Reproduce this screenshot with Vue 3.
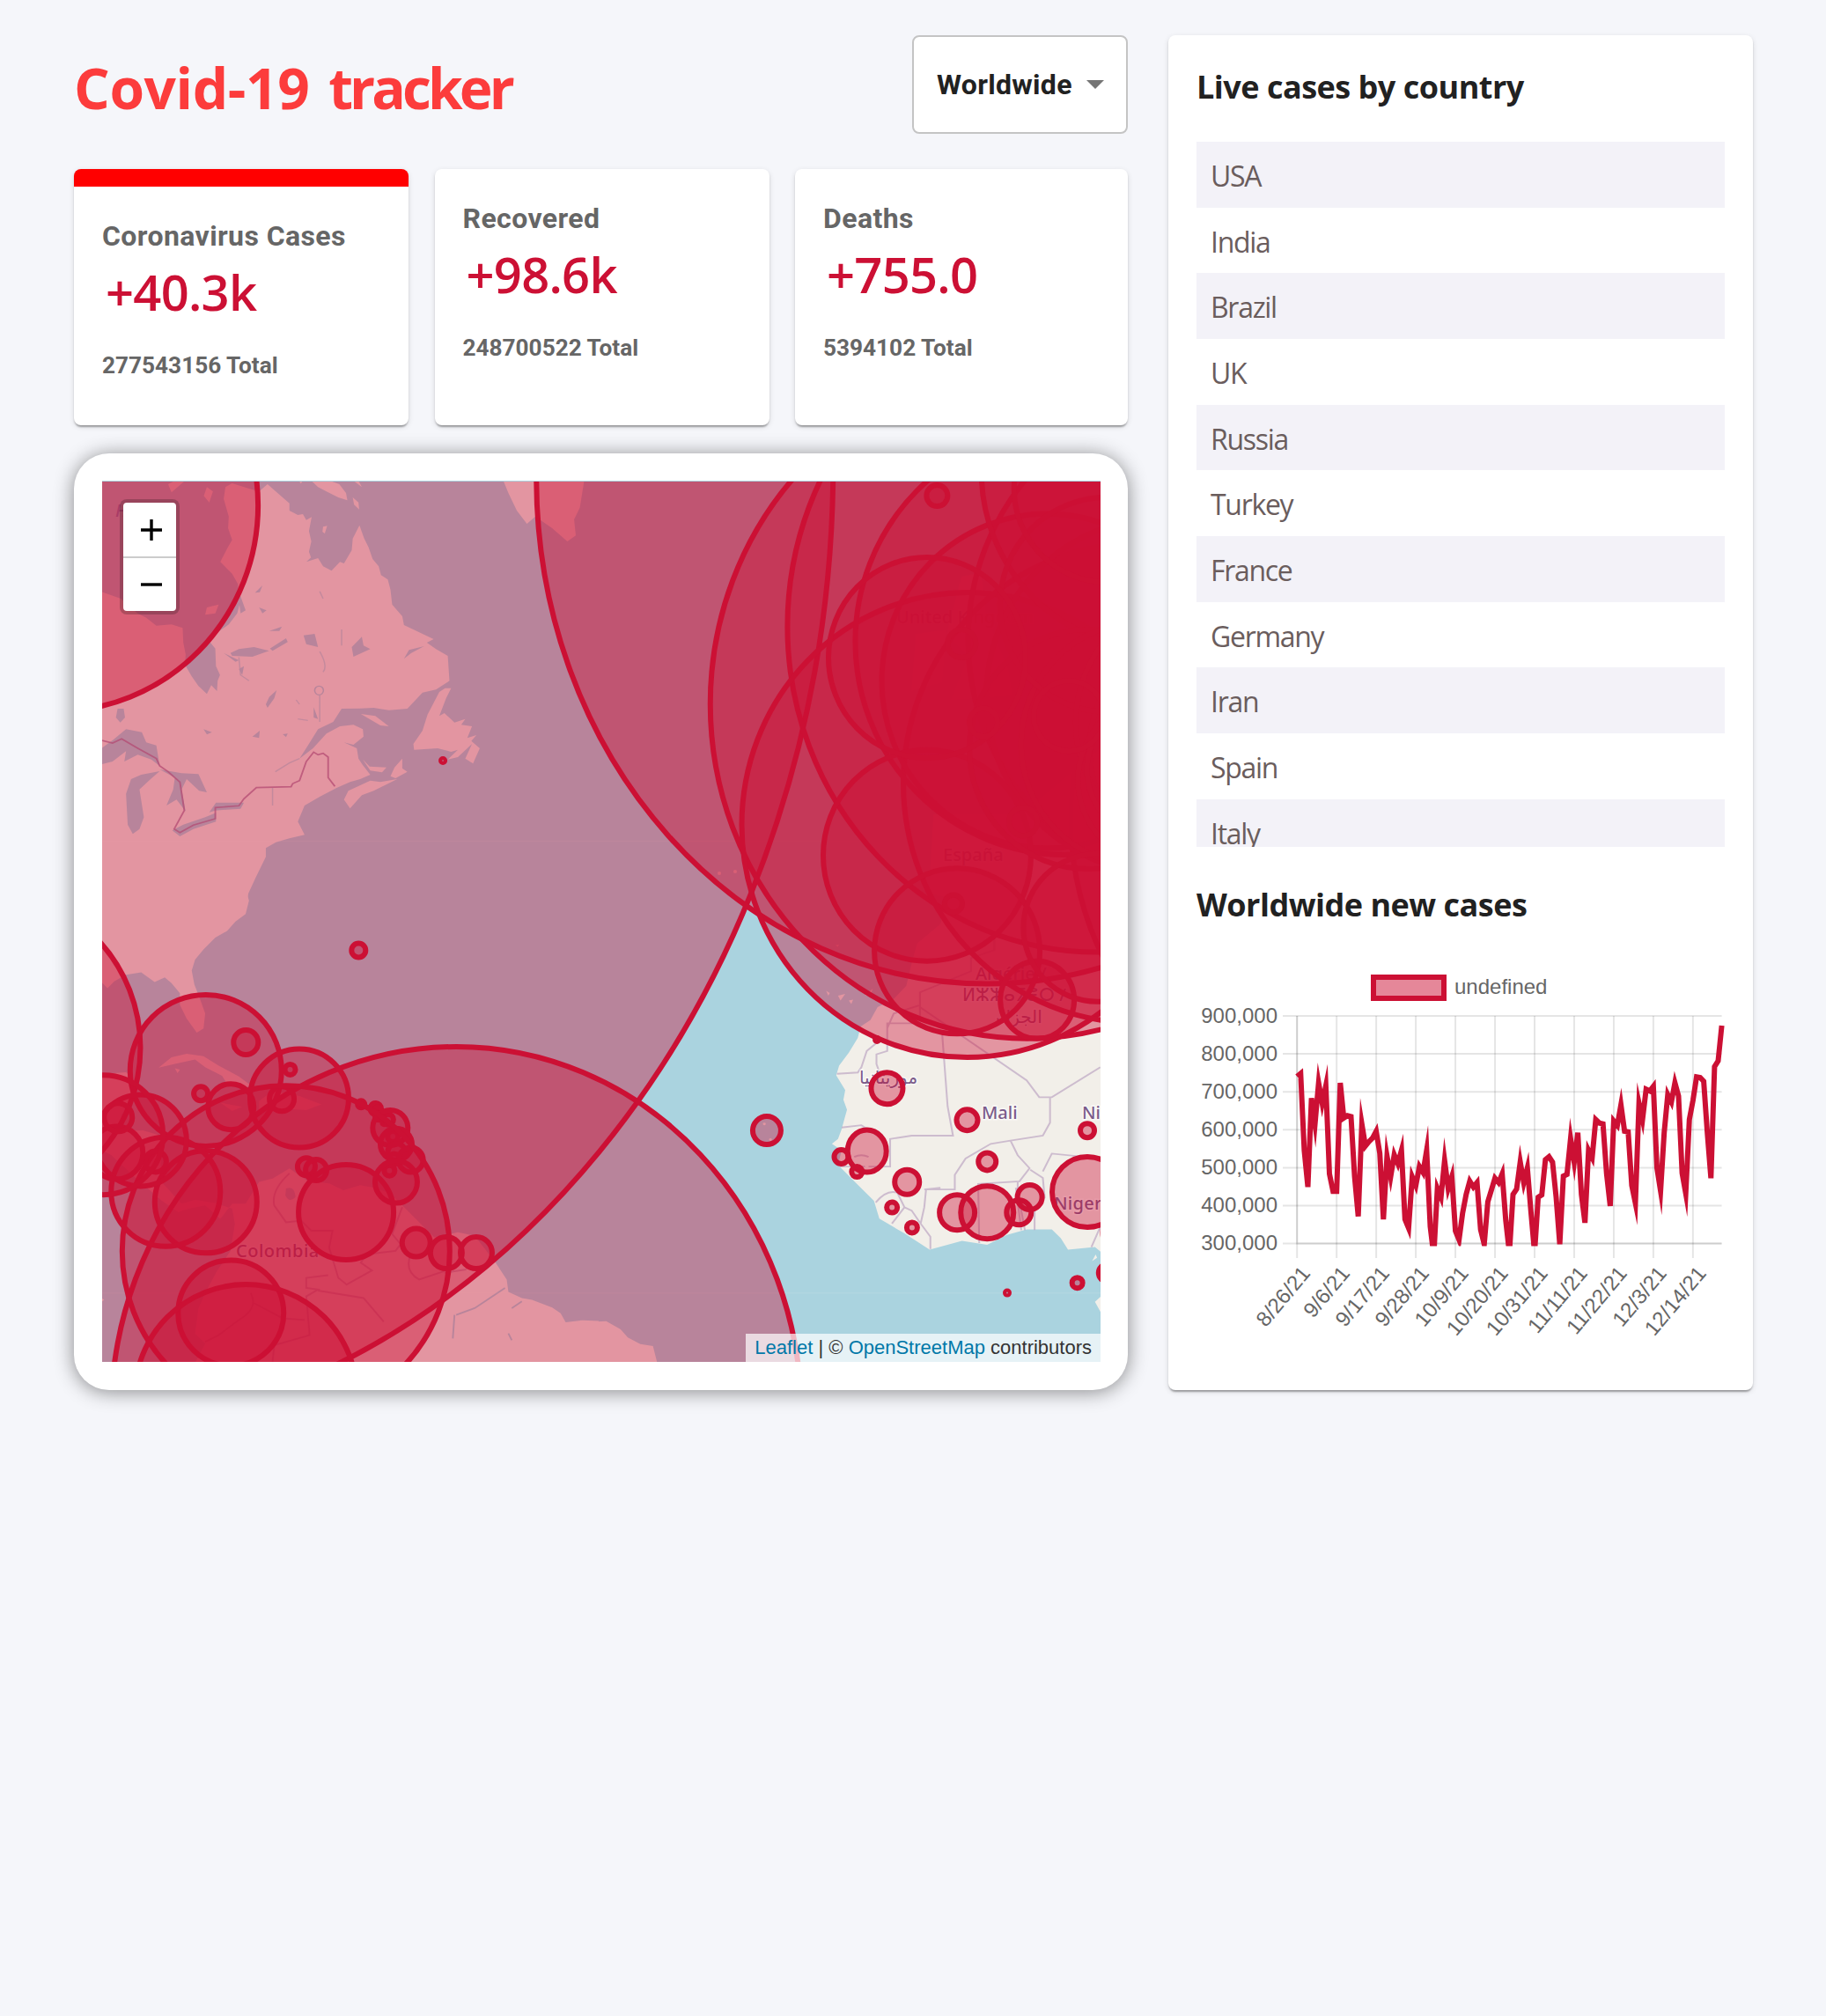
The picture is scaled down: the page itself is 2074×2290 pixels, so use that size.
<script setup>
const stats = [
  { title: 'Coronavirus Cases', value: '+40.3k', total: '277543156 Total', active: true },
  { title: 'Recovered', value: '+98.6k', total: '248700522 Total', active: false },
  { title: 'Deaths', value: '+755.0', total: '5394102 Total', active: false },
]

const countries = ['USA', 'India', 'Brazil', 'UK', 'Russia', 'Turkey', 'France', 'Germany', 'Iran', 'Spain', 'Italy']

/* lat, lng, cases */
const cases = [
  [38, -97, 52500000], [60, -95, 1900000], [23, -102, 3930000], [-10, -55, 22180000],
  [54, -2, 11640000], [39, 35, 9230000], [46, 2, 8800000], [51, 9, 6900000],
  [40, -4, 5650000], [42.8333, 12.8333, 5470000], [52, 20, 4030000], [52.5, 5.75, 3020000],
  [50.8333, 4, 2050000], [49.75, 15.5, 2430000], [62, 15, 1280000], [39.5, -8, 1240000],
  [47, 8, 1240000], [47.3333, 13.3333, 1260000], [47, 20, 1240000], [46, 25, 1800000],
  [44, 21, 1290000], [39, 22, 1080000], [43, 25, 730000], [56, 10, 680000], [62, 10, 370000],
  [48.6667, 19.5, 1350000], [45.1667, 15.5, 690000], [46, 15, 455000], [44, 18, 288000],
  [53, -8, 680000], [32, -5, 953000], [28, 3, 215000], [34, 9, 722000], [49.75, 6.1667, 100000],
  [62, -7, 5000], [49.3723, -2.3644, 17000], [54.23, -4.55, 14000], [36.1833, -5.3667, 8000],
  [42.5, 1.6, 22000], [24.5, -13, 10], [20, -12, 40000], [17, -4, 19500], [16, 8, 7200],
  [14, -14, 74300], [13.4667, -16.5667, 10000], [12, -15, 6400], [11, -10, 31000],
  [8.5, -11.5, 6500], [6.5, -9.5, 5900], [8, -5, 62700], [8, -2, 133600], [8, 1.1667, 27500],
  [9.5, 2.25, 24900], [13, -2, 17000], [10, 8, 228000], [6, 12, 108000], [2, 10, 13700],
  [1, 7, 3740], [0, 0, 712], [16, -24, 39000], [46.8333, -56.3333, 90], [32.3333, -64.75, 5900],
  [24.25, -76, 23200], [21.5, -80, 964000], [19.5, -80.5, 8300], [21.75, -71.5833, 3300],
  [18.25, -77.5, 92000], [19, -72.4167, 25900], [19, -70.6667, 413000], [18.5, -64.5, 2900],
  [18.11, -63.03, 3900], [18.0425, -63.0548, 4600], [18.25, -63.1667, 1600],
  [17.9, -62.8333, 1700], [17.3333, -62.75, 2800], [17.05, -61.8, 4200], [16.25, -61.5833, 55700],
  [16.75, -62.2, 44], [15.4167, -61.3333, 6500], [14.6667, -61, 46500], [13.8833, -60.9667, 13300],
  [13.1667, -59.5333, 27600], [13.25, -61.2, 5800], [12.1167, -61.6667, 5900], [11, -61, 87500],
  [12.5, -69.9667, 16900], [12.1696, -68.99, 17600], [8, -66, 435000], [4, -72, 5110000],
  [-2, -77.5, 540000], [-10, -76, 2270000], [9, -80, 486000], [10, -84, 569000], [13, -85, 17400],
  [15, -86.5, 379000], [13.8333, -88.9167, 121500], [15.5, -90.25, 624000], [17.25, -88.75, 31800],
  [5, -59, 39300], [4, -56, 51500], [4, -53, 46500],
]

/* Web Mercator at 4096px per world, offset to the visible window */
const rad = Math.PI / 180
const R = 4096 / (2 * Math.PI)
const X0 = 1144
const Y0 = 1468.6
const projX = (lng) => X0 + lng * rad * R
const projY = (lat) => {
  const l = Math.max(-85.0511, Math.min(85.0511, lat)) * rad
  return Y0 - R * Math.log(Math.tan(Math.PI / 4 + l / 2))
}
const unprojLat = (y) => (2 * Math.atan(Math.exp((Y0 - y) / R)) - Math.PI / 2) / rad
const snap = (r) => 2 * Math.max(Math.round(r / 2), 1)

function circle([lat, lng, n]) {
  const latR = (Math.sqrt(n) * 800) / 6371000 / rad
  const top = projY(lat + latR)
  const bottom = projY(lat - latR)
  const cy = (top + bottom) / 2
  const lat2 = unprojLat(cy)
  let lngR =
    Math.acos(
      (Math.cos(latR * rad) - Math.sin(lat * rad) * Math.sin(lat2 * rad)) /
        (Math.cos(lat * rad) * Math.cos(lat2 * rad)),
    ) / rad
  if (!lngR) lngR = latR / Math.cos(rad * lat)
  return { cx: projX(lng), cy, rx: snap(lngR * rad * R), ry: snap(cy - top) }
}
const circles = cases.map(circle)

/* chart */
const yTicks = ['900,000', '800,000', '700,000', '600,000', '500,000', '400,000', '300,000'].map((t, i) => ({
  t,
  y: 114 + i * 43.1,
}))
const dayW = 4.088
const xTicks = ['8/26/21', '9/6/21', '9/17/21', '9/28/21', '10/9/21', '10/20/21', '10/31/21', '11/11/21', '11/22/21', '12/3/21', '12/14/21'].map(
  (t, i) => ({ t, x: 114.2 + i * 11 * dayW }),
)
const daily = [
  278, 268, 530, 655, 352, 440, 300, 370, 310, 610, 670, 670, 300, 420, 412, 415, 620, 755, 440, 515, 500, 488, 465,
  540, 765, 550, 620, 545, 575, 530, 765, 795, 620, 650, 585, 605, 530, 790, 890, 660, 690, 565, 660, 620, 805, 835,
  745, 680, 635, 655, 640, 800, 850, 705, 665, 625, 640, 610, 770, 880, 680, 662, 570, 640, 590, 740, 880, 690, 682,
  562, 552, 570, 690, 850, 618, 612, 490, 570, 470, 680, 777, 530, 555, 425, 437, 440, 610, 720, 430, 445, 375, 465,
  467, 650, 710, 370, 425, 322, 328, 312, 590, 668, 470, 340, 365, 300, 345, 608, 677, 425, 360, 280, 282, 295, 470,
  625, 245, 225, 105,
]
const line = daily.map((v, i) => `${(114.2 + i * dayW).toFixed(1)},${(90 + v / 3).toFixed(1)}`).join(' ')
</script>

<template>
  <div class="app">
    <main class="left">
      <header class="header">
        <h1><span>Covid-19</span> tracker</h1>
        <div class="select">
          <span>Worldwide</span>
          <svg width="20" height="10" viewBox="0 0 20 10"><path d="M0 0h20L10 10z" fill="#757575" /></svg>
        </div>
      </header>

      <section class="stats">
        <article v-for="s in stats" :key="s.title" class="card stat" :class="{ active: s.active }">
          <h2>{{ s.title }}</h2>
          <p class="value">{{ s.value }}</p>
          <p class="total">{{ s.total }}</p>
        </article>
      </section>

      <section class="map-card">
        <div class="map">
          <svg class="map-svg" viewBox="116 546 1134 1001" width="1134" height="1001">
            <rect x="116" y="546" width="1134" height="1001" fill="#aad3df" />
            <!-- Canada and the north-eastern United States -->
            <g transform="translate(80 500) scale(.38265 .33333)" fill="#f2efe9">
              <path d="M90 516L120 528 150 540 170 565 200 590 225 605 255 632 300 628 333 640 335 690 342 730 340 765 360 805 380 838 405 865 418 835 435 855 437 820 444 800 432 770 430 710 412 685 430 660 470 628 495 590 502 560 497 490 480 455 445 415 465 370 480 340 468 300 470 260 455 200 460 160 480 147 530 165 560 175 585 150 620 185 650 215 650 240 675 255 690 252 700 272 716 262 708 310 715 345 708 380 714 400 700 415 735 402 750 430 775 445 800 415 812 420 835 375 838 335 858 290 872 335 885 365 897 405 915 430 922 460 942 475 950 510 955 560 985 600 990 630 1030 652 1078 678 1058 690 1085 712 1120 735 1125 820 1085 850 1045 860 1000 915 945 920 900 912 860 914 805 915 780 960 735 985 705 1040 680 1085 720 1050 760 1000 800 975 840 970 868 985 870 1010 840 1038 812 1030 850 1050 855 1085 868 1108 890 1140 860 1155 830 1165 790 1185 740 1215 695 1245 675 1300 695 1345 650 1357 610 1370 580 1390 580 1420 550 1490 528 1545 525 1570H90z" />
              <path d="M825 1195L890 1160 920 1165 970 1155 900 1195 865 1210 830 1255 812 1225zM950 1145L962 1115 985 1085 985 1118 1000 1130 965 1152zM868 1088L888 1112 938 1115 925 1132 890 1126zM862 933L905 940 945 975 920 972zM1130 845L1112 845 1095 858 1060 935 1045 990 1018 1035 1020 1055 1090 1050 1130 1062 1150 1055 1120 1088 1150 1080 1178 1050 1192 1035 1172 1085 1195 1102 1215 1050 1190 1025 1205 1005 1178 1015 1192 975 1160 970 1172 950 1140 962 1110 930 1095 940 1115 880z" />
              <path d="M715 138L735 160 760 175 795 195 822 205 818 180 798 150 770 138zM840 138L865 160 855 138zM838 195L855 212 857 236 842 220zM750 295L762 292 755 318 748 312zM1285 138L1300 180 1325 240 1355 285 1380 260 1430 300 1475 345 1500 325 1495 270 1512 230 1525 138zM290 150L310 138 340 138 300 178zM405 160L423 175 412 212 396 190zM678 138L690 138 684 148zM405 570L440 560 430 590 400 595z" />
              <g fill="#aad3df">
                <path d="M90 1052L128 1020 165 985 212 995 225 1030 255 1040 265 1110 240 1088 200 1072 160 1095 165 1060 125 1095 90 1105zM165 1205L180 1155 210 1140 265 1128 238 1155 205 1190 218 1285 205 1325 185 1342 170 1310zM265 1122L330 1135 380 1138 405 1200 382 1195 345 1155 330 1190 342 1265 315 1225 285 1245 305 1190 310 1150zM302 1330L335 1310 400 1285 432 1270 432 1300 365 1325 325 1350zM412 1268L432 1235 515 1235 505 1256 430 1262zM140 915L158 915 162 945 148 962 135 945zM475 725L500 712 545 705 590 718 540 738 480 735zM592 710L640 675 645 688 600 718zM692 665L725 660 735 705 700 695zM835 705L865 670 870 700 890 712 840 738zM990 745L1005 715 1050 702 1012 725zM580 900L590 875 612 852 605 880 585 912zM590 650L628 635 620 650zM548 520L570 495 562 518zM560 570L582 580 570 590zM495 500L520 580 505 590zM630 1002L645 1000 640 1012zM540 1010L562 990 560 1015zM395 985L420 995 405 1003zM722 910L735 950 722 945zM500 780L515 770 510 800zM455 725L500 750 490 755z" />
                <path d="M680 1085L650 1100 608 1130M740 870V960M740 720Q765 770 750 790M805 645V700M740 515L750 540M500 740L505 800 530 820M600 1185V1245M670 885L680 900M675 950L705 955" fill="none" stroke="#aad3df" stroke-width="4" stroke-opacity=".7" />
                <ellipse cx="738" cy="853" rx="13" ry="15" fill="none" stroke="#aad3df" stroke-width="4" />
              </g>
              <path d="M90 1022L125 1032 152 1018 200 1050 255 1085 265 1110 290 1130 325 1165 338 1262 308 1325 325 1337 365 1312 430 1290 430 1252 500 1246 515 1222 552 1184 655 1181 660 1170 680 1160 700 1095 722 1063 735 1072 750 1067 765 1080 765 1150 785 1180" fill="none" stroke="#a3719c" stroke-opacity=".75" stroke-width="5" />
            </g>
            <!-- South-eastern US, Caribbean and South America -->
            <g transform="translate(80 1000) scale(.38265)" fill="#f2efe9">
              <path d="M90 -5H515L518 20 530 60 520 100 490 122 465 150 430 170 395 205 370 235 360 268 368 310 382 345 400 395 395 440 375 452 345 410 325 370 325 335 300 305 280 288 250 302 210 273 165 280 130 300 110 320 90 300zM90 575L165 570 188 590 175 655 150 700 155 745 215 742 260 755 275 790 268 840 275 900 330 960 370 948 430 958 480 975 488 1020 475 1100 435 1160 405 1215 380 1270 370 1345 400 1375 370 1432H1568V1308L1520 1306 1470 1312 1455 1285 1430 1268 1370 1245 1340 1240 1300 1222 1295 1185 1262 1135 1200 1055 1150 1045 1080 1060 1040 1020 985 965 950 930 900 912 860 905 810 920 770 900 700 890 650 855 600 885 560 895 520 960 480 960 445 1005 400 965 350 975 320 985 270 950 190 880 120 815 90 800z" />
              <path d="M262 556L300 525 345 515 395 522 440 550 500 582 540 612 470 612 450 580 400 555 370 532 310 545zM560 655L600 625 680 640 745 665 700 682 640 678 560 680zM445 660L510 672 480 685zM310 558L325 562 318 572zM92 1240L100 1245 94 1250z" />
              <path d="M640 915Q665 905 668 940 650 960 638 935z" fill="#aad3df" />
              <path d="M1140 1290L1135 1360M1145 1290L1200 1270 1290 1210M1300 1345L1310 1365M1340 1250L1310 1270" stroke="#aad3df" stroke-width="5" fill="none" />
              <g fill="none" stroke="#a987ae" stroke-opacity=".55" stroke-width="5">
                <path d="M650 870Q595 920 605 965L640 1015 685 1010 715 1040H778L768 1090 795 1180 820 1200 895 1158 862 1135 880 1110 965 1100 980 1080 955 1050 985 970M1010 1110Q990 1160 1035 1185L1110 1160M765 1172L700 1180V1210L735 1215 700 1235 710 1350 605 1380 600 1429M535 1225Q560 1270 500 1305L440 1350 400 1370M545 1255L630 1300 695 1305M735 1218L870 1240 930 1310M1110 1165L1175 1155" />
              </g>
            </g>
            <!-- Brazil shoulder and West Africa -->
            <g transform="translate(660 1020) scale(.40816 .3699)" fill="#f2efe9">
              <path d="M-2 1297L30 1302 70 1300 110 1325 130 1350 165 1370 200 1376 212 1428H-2z" />
              <path d="M1450 -10H1020L1000 80 935 140 920 200 905 270 870 310 825 335 805 375 778 395 770 430 745 475 718 515 710 545 735 590 730 620 740 650 725 710 715 740 698 755 725 775 715 820 760 870 815 930 830 985 900 1030 970 1080 1060 1053 1130 1065 1185 1035 1240 1018 1310 1018 1335 1045 1355 1080 1430 1072 1450 1090zM1450 1220L1430 1240 1450 1280zM715 300L735 295 722 315zM745 315L757 312 752 326zM682 285L692 292 688 300zM790 300L812 278 805 300zM708 145L718 143 714 150zM1422 1115L1432 1095 1436 1105z" />
              <circle cx="510" cy="694" r="4" /><circle cx="527" cy="742" r="4" />
              <g fill="none" stroke="#b99fc0" stroke-opacity=".65" stroke-width="5">
                <path d="M712 540L770 536 780 520 795 470 828 440M1150 105L1150 160 1085 185V225L943 290V385H852V470L822 480V510L835 550M943 335L1240 560 1275 612 1310 612 1445 520M1005 420L1020 640 1035 730 920 730 860 740V825L800 825M725 705L780 698 840 740M1305 612V690L1285 730 1195 745 1140 755 1070 800 1040 850 1040 895 960 895 955 950 945 1000 972 1040V1078M1195 745L1215 790 1248 830 1220 870 1105 878 1108 1060M1215 870V900L1235 1020M1250 835L1285 860 1290 920 1262 950V1020M1285 840L1310 785 1445 800M1210 890L1225 1020M820 935Q850 895 880 905L900 950 865 1000M900 950L920 960 945 1000M720 825H790M760 795Q780 785 800 795M955 895L1000 890M852 470V400L870 355 940 330M1420 1072L1445 1010" />
              </g>
            </g>
            <g fill="#f2efe9">
              <path d="M1092 655L1115 650 1120 700 1145 760 1150 790 1080 795 1100 745 1075 720zM1040 720L1075 715 1070 775 1035 785zM1060 925L1160 925 1250 850V1025H1100L1055 1015z" />
              <circle cx="835" cy="990" r="2" /><circle cx="817" cy="992" r="2" />
            </g>
            <g class="labels">
              <text x="268" y="1428" letter-spacing=".5">Colombia</text>
              <text x="1115" y="1271">Mali</text>
              <text x="1229" y="1271">Niger</text>
              <text x="1197" y="1374" letter-spacing=".3">Nigeria</text>
              <text x="976" y="1231" class="ar">موريتانيا</text>
              <text x="1108" y="1113">Algérie /</text>
              <text x="1093" y="1137">ⵍⵣⵣⴰⵢⴻⵔ /</text>
              <text x="1126" y="1162" class="ar">الجزائر</text>
              <text x="1071" y="978">España</text>
              <text x="1018" y="708">United Kingdom</text>
              <text x="131" y="587" class="sea">Hudson</text>
            </g>
            <path d="M116 955.5H1250M116 1468.8H1250" stroke="#fff" stroke-opacity=".12" />
            <g class="cases">
              <ellipse v-for="(c, i) in circles" :key="i" :cx="c.cx" :cy="c.cy" :rx="c.rx" :ry="c.ry" />
            </g>
            <rect x="116" y="546" width="1134" height="1" fill="#aad3df" />
          </svg>
          <div class="zoom">
            <span><svg width="24" height="24" viewBox="0 0 24 24"><path d="M12 0v24M0 12h24" /></svg></span>
            <span><svg width="24" height="24" viewBox="0 0 24 24"><path d="M0 12h24" /></svg></span>
          </div>
          <div class="attribution"><a>Leaflet</a> | © <a>OpenStreetMap</a> contributors</div>
        </div>
      </section>
    </main>

    <aside class="card right">
      <h3>Live cases by country</h3>
      <ul class="table">
        <li v-for="c in countries" :key="c">{{ c }}</li>
      </ul>
      <h3 class="second">Worldwide new cases</h3>
      <svg class="chart" width="600" height="480" viewBox="0 0 600 480">
        <defs>
          <clipPath id="plot"><rect x="111" y="110" width="489" height="265.5" /></clipPath>
        </defs>
        <rect x="201" y="70" width="80" height="24" fill="#cc1034" fill-opacity=".5" stroke="#cc1034" stroke-width="6" />
        <text x="293" y="89">undefined</text>
        <g stroke="#000" stroke-opacity=".1" stroke-width="2">
          <path v-for="t in yTicks" :key="t.t" :d="`M98 ${t.y}H596.6`" />
          <path v-for="t in xTicks" :key="t.t" :d="`M${t.x} 114V389`" />
          <path d="M114.2 114V372.6H596.6" fill="none" />
        </g>
        <text v-for="t in yTicks" :key="t.t" x="92" :y="t.y + 7.5" text-anchor="end">{{ t.t }}</text>
        <text v-for="t in xTicks" :key="t.t" text-anchor="end" :transform="`translate(${t.x + 10} 402) rotate(-50)`" y="8">{{ t.t }}</text>
        <polyline :points="line" fill="none" stroke="#cc1034" stroke-width="6" stroke-miterlimit="10" clip-path="url(#plot)" />
      </svg>
    </aside>
  </div>
</template>

<style>
body {
  background: #f5f6fa;
}
</style>

<style scoped>
.app {
  box-sizing: border-box;
  display: flex;
  gap: 46px;
  align-items: flex-start;
  width: 2074px;
  height: 2290px;
  padding: 40px 84px;
  background: #f5f6fa;
  font-family: 'Open Sans', 'Noto Sans', sans-serif;
}
h1, h2, h3, p, ul {
  margin: 0;
  padding: 0;
}
.left {
  width: 1197px;
}
.header {
  display: flex;
  justify-content: space-between;
  height: 112px;
  margin-bottom: 40px;
}
h1 {
  padding-top: 16px;
  font-size: 64px;
  line-height: 87px;
  font-weight: 700;
  letter-spacing: -3.9px;
  word-spacing: 9px;
  color: #fc3c3c;
  white-space: nowrap;
}
h1 span {
  letter-spacing: -.4px;
}
.select {
  box-sizing: border-box;
  display: flex;
  align-items: center;
  justify-content: space-between;
  width: 245px;
  height: 112px;
  padding: 0 25px 0 26px;
  border: 2px solid #c4c4c4;
  border-radius: 8px;
  background: #fff;
  font: 700 32px/38px Roboto, sans-serif;
  letter-spacing: .3px;
  color: #212121;
}
.card {
  box-sizing: border-box;
  border-radius: 8px;
  background: #fff;
  box-shadow: 0 4px 2px -2px rgba(0, 0, 0, .2), 0 2px 2px rgba(0, 0, 0, .14), 0 2px 6px rgba(0, 0, 0, .12);
}
.stats {
  display: flex;
  justify-content: space-between;
}
.stat {
  width: 380px;
  height: 291px;
  padding: 32px;
}
.stat:last-child {
  width: 378px;
}
.stat.active {
  border-top: 20px solid #f00;
}
.stat h2 {
  font: 700 32px/48px Roboto, sans-serif;
  letter-spacing: .4px;
  color: #666;
}
.value {
  padding: 1px 0 0 4px;
  font-size: 56px;
  line-height: 76px;
  font-weight: 600;
  letter-spacing: -.7px;
  color: #cc1034;
}
.total {
  margin-top: 26px;
  font: 700 26.2px/40px Roboto, sans-serif;
  color: #666;
}
.map-card {
  box-sizing: border-box;
  width: 1197px;
  height: 1064px;
  margin-top: 31.5px;
  padding: 31.5px 31px 32px 32px;
  border-radius: 40px;
  background: #fff;
  box-shadow: 0 2px 22px rgba(0, 0, 0, .45);
}
.map {
  position: relative;
  overflow: hidden;
  height: 1001px;
}
.map-svg {
  display: block;
}
.cases ellipse {
  fill: #cc1034;
  fill-opacity: .4;
  stroke: #cc1034;
  stroke-width: 6;
}
.labels {
  font: 500 20px 'Noto Sans', sans-serif;
  fill: #7b5b8a;
  stroke: #fff;
  stroke-opacity: .6;
  stroke-width: 3;
  paint-order: stroke;
}
.labels .ar {
  font-family: 'DejaVu Sans', 'Noto Sans', sans-serif;
}
.labels .sea {
  font-style: italic;
  fill: #6b8fc0;
  stroke: none;
}
.zoom {
  position: absolute;
  top: 20.5px;
  left: 20px;
  width: 60px;
  border: 4px solid rgba(0, 0, 0, .2);
  border-radius: 8px;
  background: #fff;
  background-clip: padding-box;
}
.zoom span {
  display: flex;
  align-items: center;
  justify-content: center;
  height: 61px;
  padding: 1px 0 0 3px;
  box-sizing: border-box;
}
.zoom span + span {
  border-top: 2px solid #ccc;
  padding-top: 0;
  height: 62px;
}
.zoom path {
  stroke: #000;
  stroke-width: 3.4;
}
.attribution {
  position: absolute;
  right: 0;
  bottom: 0;
  padding: 0 10px;
  background: rgba(255, 255, 255, .7);
  font: 22px/32px 'Liberation Sans', Arial, sans-serif;
  color: #333;
  white-space: nowrap;
}
.attribution a {
  color: #0078a8;
}
.right {
  width: 663.5px;
  height: 1539px;
  padding: 32px;
}
h3 {
  padding-top: 1px;
  font-size: 36px;
  line-height: 51px;
  font-weight: 700;
  letter-spacing: -.5px;
  color: #212121;
  white-space: nowrap;
}
.table {
  height: 801px;
  margin-top: 37px;
  overflow: hidden;
  list-style: none;
}
.table li {
  box-sizing: border-box;
  height: 74.66px;
  padding: 2px 16px 0;
  font-size: 32px;
  line-height: 74px;
  letter-spacing: -1.3px;
  color: #6a5d5d;
}
.table li:nth-child(odd) {
  background: #f3f2f8;
}
h3.second {
  margin-top: 39px;
}
.chart {
  display: block;
  margin-top: -13px;
  font: 24px 'Liberation Sans', Arial, sans-serif;
  fill: #666;
}
</style>
